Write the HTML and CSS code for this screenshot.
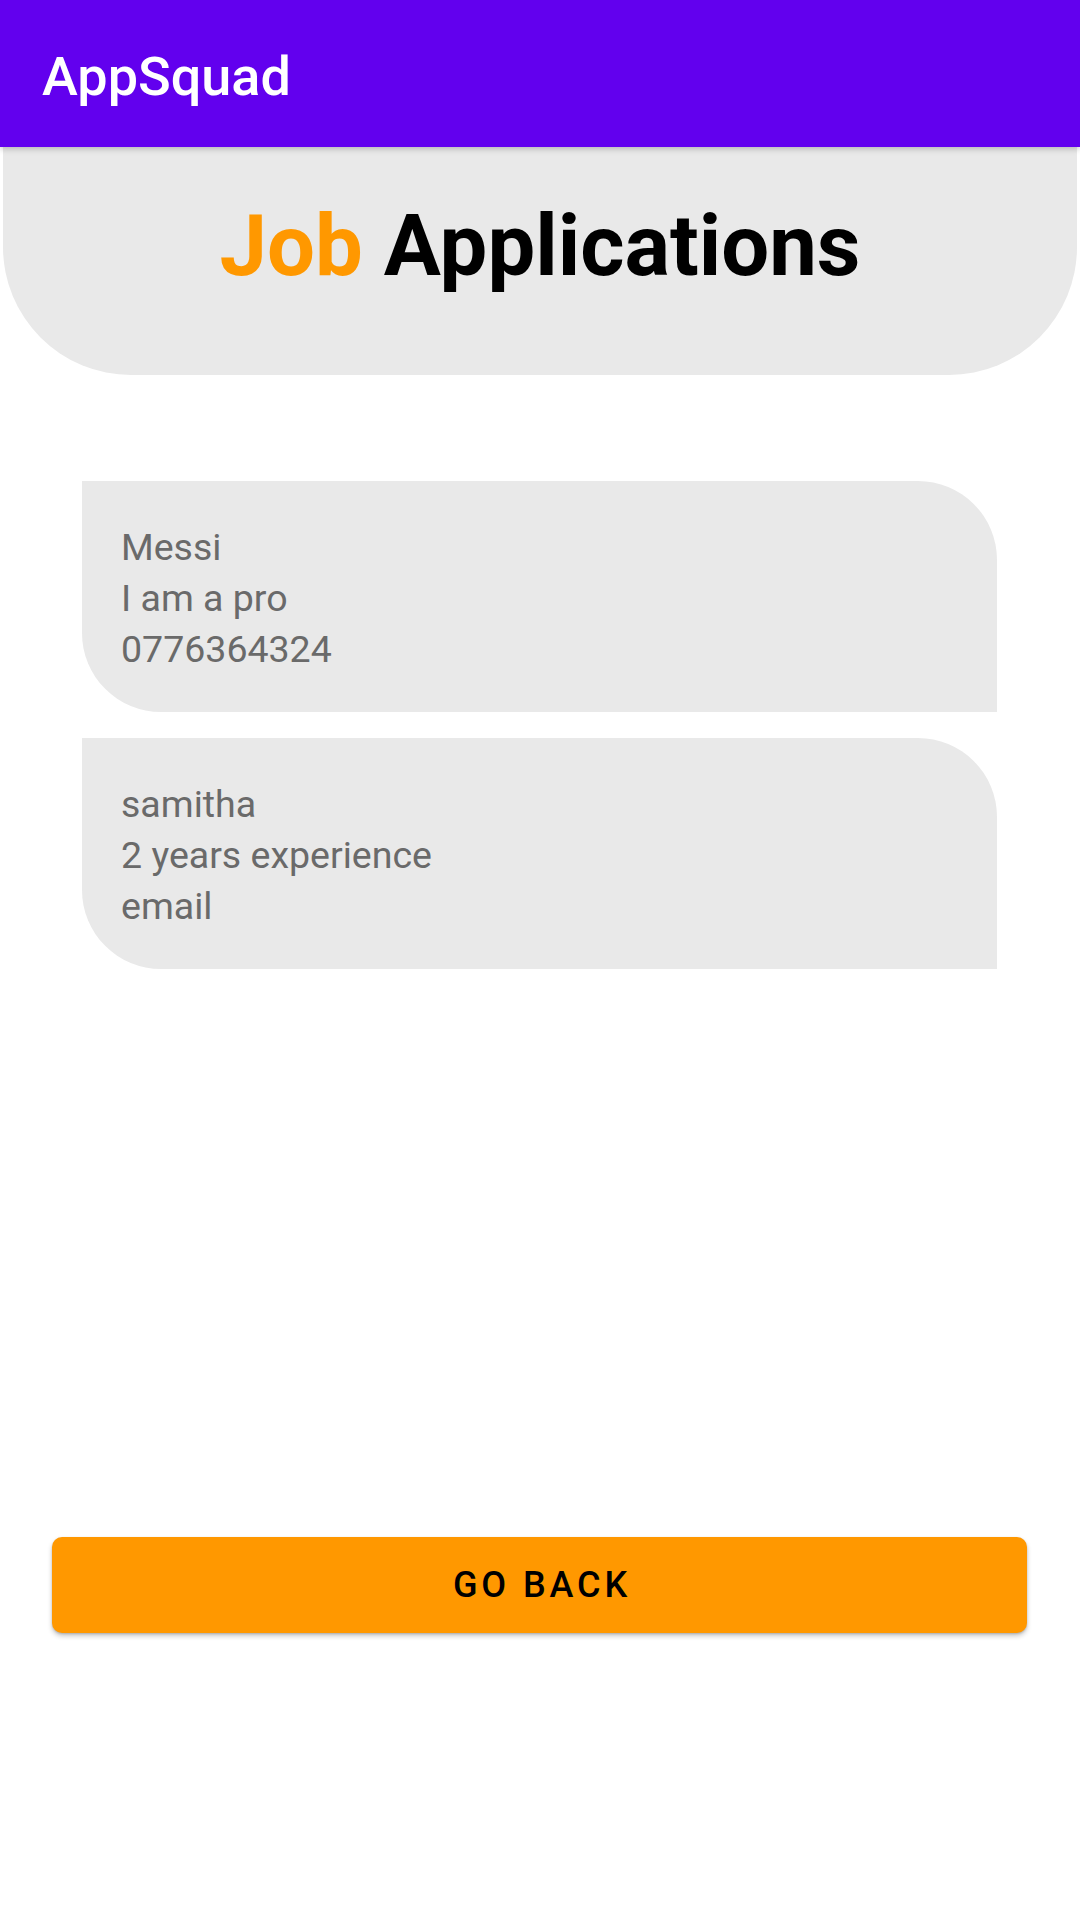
FILE: index.html
```html
<!DOCTYPE html>
<html>
<head>
<meta charset="utf-8">
<link rel="stylesheet" href="styles.css">
</head>
<body>
<div class="screen">
  <header class="appbar">
    <div class="appbar-title">AppSquad</div>
  </header>
  <section class="hero">
    <h1 class="hero-title"><span class="accent">Job</span> Applications</h1>
  </section>
  <main class="list">
    <div class="card">
      <div class="line">Messi</div>
      <div class="line">I am a pro</div>
      <div class="line">0776364324</div>
    </div>
    <div class="card">
      <div class="line">samitha</div>
      <div class="line">2 years experience</div>
      <div class="line">email</div>
    </div>
  </main>
  <div class="actions">
    <button class="btn">GO BACK</button>
  </div>
</div>
</body>
</html>
```

FILE: styles.css
```css
* { box-sizing: border-box; }
html, body {
  margin: 0;
  padding: 0;
  background: #ffffff;
  font-family: Roboto, "Noto Sans", sans-serif;
}
.screen {
  width: 1080px;
  height: 1920px;
  display: flex;
  flex-direction: column;
  position: relative;
}
.appbar {
  height: 147px;
  background: #6200ee;
  padding: 50px 0 0 42px;
  position: relative;
  z-index: 2;
  box-shadow: 0 2px 6px rgba(0,0,0,0.22);
  flex: none;
}
.appbar-title {
  color: #ffffff;
  font-size: 54px;
  font-weight: 500;
  line-height: 1;
}
.hero {
  margin: 0 3px;
  height: 228px;
  background: #e9e9e9;
  border-radius: 0 0 128px 128px;
  padding-top: 57px;
  flex: none;
}
.hero-title {
  margin: 0;
  text-align: center;
  font-size: 85px;
  font-weight: 700;
  line-height: 1;
  color: #000000;
}
.accent { color: #ff9800; }
.list {
  margin: 106px 0 0 82px;
  width: 915px;
  display: flex;
  flex-direction: column;
  gap: 26px;
  flex: none;
}
.card {
  height: 231px;
  background: #e9e9e9;
  border-radius: 0 79px 0 79px;
  padding: 41px 0 0 39px;
}
.line {
  font-size: 37.5px;
  line-height: 51px;
  color: #6a6a6a;
}
.actions {
  margin: 568px 0 0 52px;
  flex: none;
}
.btn {
  width: 975px;
  height: 96px;
  border: none;
  border-radius: 10px;
  background: #ff9800;
  color: #000000;
  font-family: Roboto, "Noto Sans", sans-serif;
  font-size: 36px;
  font-weight: 500;
  letter-spacing: 3.9px;
  padding: 0 0 0 5px;
  box-shadow: 0 3px 5px rgba(0,0,0,0.22), 0 1px 2px rgba(0,0,0,0.15);
}
```
